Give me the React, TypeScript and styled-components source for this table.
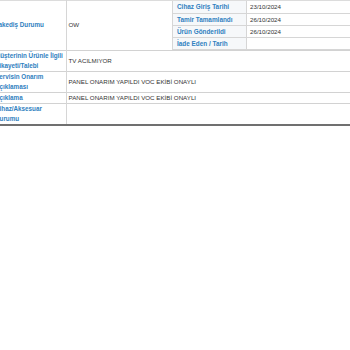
import React from 'react';
import styled, { createGlobalStyle } from 'styled-components';

const GlobalStyle = createGlobalStyle`
  html, body {
    margin: 0;
    padding: 0;
    background: #ffffff;
    overflow: hidden;
  }
  body {
    font-family: "Liberation Sans", Arial, sans-serif;
  }
`;

const Page = styled.div`
  width: 350px;
  height: 350px;
  overflow: hidden;
`;

const MainTable = styled.table`
  width: 358px;
  margin-left: -8px;
  border-collapse: collapse;
  table-layout: fixed;
  border-top: 1px solid #dcdcdc;
  border-bottom: 2px solid #707070;
`;

const Row = styled.tr<{ h: number }>`
  height: ${({ h }) => h}px;
  border-bottom: 1px solid #d2d2d2;
  &:last-child {
    border-bottom: none;
  }
`;

const LabelCell = styled.td`
  padding: 0 1px 0 3px;
  color: #2f80c0;
  font-weight: bold;
  font-size: 6.3px;
  line-height: 10px;
  vertical-align: middle;
  border-right: 1px solid #d6d6d6;
`;

const ValueCell = styled.td`
  padding: 0 2px;
  color: #333333;
  font-size: 6.2px;
  line-height: 10px;
  vertical-align: middle;
`;

const NestedCell = styled.td`
  padding: 0;
  vertical-align: top;
`;

const DateTable = styled.table`
  width: 100%;
  border-collapse: collapse;
  table-layout: fixed;
  border-left: 1px solid #d6d6d6;
  border-bottom: 1px solid #d6d6d6;
`;

const DateRow = styled.tr`
  height: 12px;
  border-bottom: 1px solid #d6d6d6;
`;

const DateLabel = styled.td`
  padding: 1px 3px 0 4px;
  background: #f6f8fa;
  color: #2f80c0;
  font-weight: bold;
  font-size: 6.4px;
  line-height: 10px;
  border-right: 1px solid #d6d6d6;
  white-space: nowrap;
`;

const DateValue = styled.td`
  padding: 1px 3px 0;
  color: #333333;
  font-size: 6.2px;
  line-height: 10px;
`;

const dates = [
  { label: 'Cihaz Giriş Tarihi', value: '23/10/2024' },
  { label: 'Tamir Tamamlandı', value: '26/10/2024' },
  { label: 'Ürün Gönderildi', value: '26/10/2024' },
  { label: 'İade Eden / Tarih', value: '' },
];

const rows = [
  { label: 'Müşterinin Ürünle İlgili Şikayeti/Talebi', value: 'TV ACILMIYOR', h: 20 },
  { label: 'Servisin Onarım Açıklaması', value: 'PANEL ONARIM YAPILDI VOC EKİBİ ONAYLI', h: 20 },
  { label: 'Açıklama', value: 'PANEL ONARIM YAPILDI VOC EKİBİ ONAYLI', h: 11 },
  { label: 'Cihaz/Aksesuar Durumu', value: '', h: 20 },
];

export default function App() {
  return (
    <Page>
      <GlobalStyle />
      <MainTable>
        <colgroup>
          <col style={{ width: 74 }} />
          <col style={{ width: 106 }} />
          <col style={{ width: 178 }} />
        </colgroup>
        <tbody>
          <Row h={49}>
            <LabelCell>Takediş Durumu</LabelCell>
            <ValueCell>OW</ValueCell>
            <NestedCell>
              <DateTable>
                <colgroup>
                  <col style={{ width: 74 }} />
                  <col />
                </colgroup>
                <tbody>
                  {dates.map((d) => (
                    <DateRow key={d.label}>
                      <DateLabel>{d.label}</DateLabel>
                      <DateValue>{d.value}</DateValue>
                    </DateRow>
                  ))}
                </tbody>
              </DateTable>
            </NestedCell>
          </Row>
          {rows.map((r) => (
            <Row key={r.label} h={r.h}>
              <LabelCell>{r.label}</LabelCell>
              <ValueCell colSpan={2}>{r.value}</ValueCell>
            </Row>
          ))}
        </tbody>
      </MainTable>
    </Page>
  );
}
